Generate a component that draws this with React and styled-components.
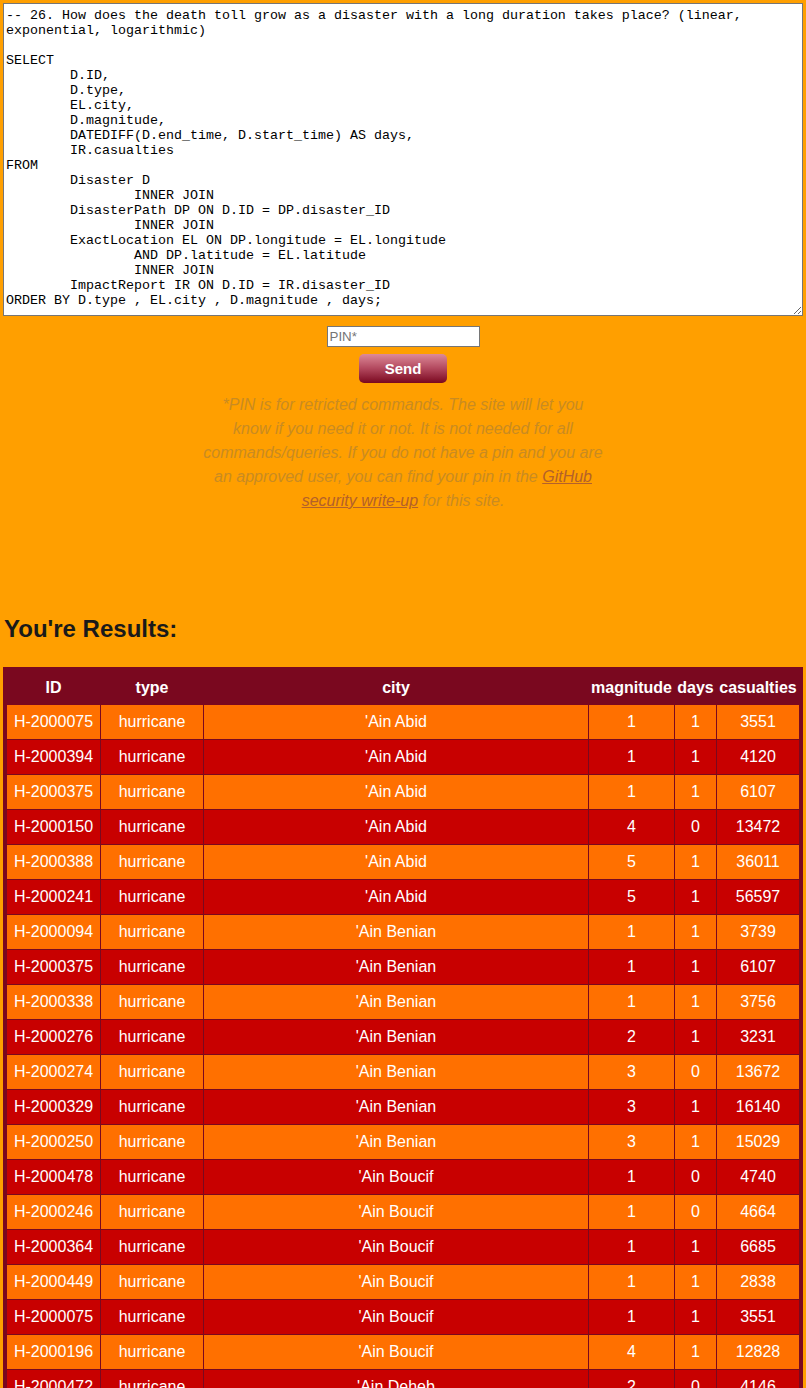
import React from 'react'
import styled, { createGlobalStyle } from 'styled-components'

const GlobalStyle = createGlobalStyle`
    html, body {
        margin: 0;
        background: #ff9f00;
    }
    body {
        font-family: "Liberation Sans", Arial, sans-serif;
    }
`;

const Page = styled.div`
    padding: 3px;
    display: flex;
    flex-direction: column;
`;

const QueryBox = styled.textarea`
    box-sizing: border-box;
    width: 800px;
    height: 313px;
    margin: 0;
    padding: 4px 2px 2px;
    border: 1px solid #767676;
    background: #fff;
    color: #000;
    font-family: "Liberation Mono", "Courier New", monospace;
    font-size: 13.333px;
    line-height: 15px;
    tab-size: 8;
    resize: both;
    outline: none;
`;

const Form = styled.div`
    display: flex;
    flex-direction: column;
    align-items: center;
    padding-top: 10px;
`;

const PinInput = styled.input`
    box-sizing: border-box;
    width: 153px;
    height: 21px;
    padding: 1px 2px;
    border: 1px solid #767676;
    background: #fff;
    font-family: "Liberation Sans", Arial, sans-serif;
    font-size: 13.333px;
    &::placeholder {
        color: #757575;
    }
`;

const SendButton = styled.button`
    margin-top: 7px;
    width: 88px;
    height: 29px;
    border: none;
    border-radius: 5px;
    background: linear-gradient(to bottom, #dd8a98 0%, #b2485e 50%, #7a081f 100%);
    color: #fff;
    font-family: "Liberation Sans", Arial, sans-serif;
    font-weight: bold;
    font-size: 15px;
    cursor: pointer;
`;

const Note = styled.p`
    width: 400px;
    margin: 10px 0 0;
    text-align: center;
    font-style: italic;
    font-size: 16px;
    line-height: 24px;
    color: #c98b22;

    a {
        color: #b4612a;
    }
`;

const Heading = styled.h2`
    margin: 102px 0 0 1px;
    font-size: 24px;
    line-height: 28px;
    font-weight: bold;
    color: #1a1a1a;
`;

const Table = styled.table`
    margin-top: 24px;
    width: 800px;
    border: 3px solid #7a081f;
    border-spacing: 1px;
    background: #7a081f;
    color: #fff;
    font-size: 16px;
`;

const Head = styled.th`
    height: 33px;
    padding: 0 1px;
    font-weight: bold;
    text-align: center;
    white-space: nowrap;
`;

const Row = styled.tr`
    background: ${(p) => (p.$odd ? '#c80000' : '#ff7000')};
`;

const Cell = styled.td`
    height: 34px;
    padding: 0 1px;
    text-align: center;
    white-space: nowrap;
`;

const query = `-- 26. How does the death toll grow as a disaster with a long duration takes place? (linear, exponential, logarithmic)

SELECT
\tD.ID,
\tD.type,
\tEL.city,
\tD.magnitude,
\tDATEDIFF(D.end_time, D.start_time) AS days,
\tIR.casualties
FROM
\tDisaster D
\t\tINNER JOIN
\tDisasterPath DP ON D.ID = DP.disaster_ID
\t\tINNER JOIN
\tExactLocation EL ON DP.longitude = EL.longitude
\t\tAND DP.latitude = EL.latitude
\t\tINNER JOIN
\tImpactReport IR ON D.ID = IR.disaster_ID
ORDER BY D.type , EL.city , D.magnitude , days;`

const columns = [
    { key: 'id', label: 'ID', width: 93 },
    { key: 'type', label: 'type', width: 102 },
    { key: 'city', label: 'city', width: 384 },
    { key: 'magnitude', label: 'magnitude', width: 85 },
    { key: 'days', label: 'days', width: 41 },
    { key: 'casualties', label: 'casualties', width: 82 },
]

const rows = [
    ['H-2000075', "'Ain Abid", 1, 1, 3551],
    ['H-2000394', "'Ain Abid", 1, 1, 4120],
    ['H-2000375', "'Ain Abid", 1, 1, 6107],
    ['H-2000150', "'Ain Abid", 4, 0, 13472],
    ['H-2000388', "'Ain Abid", 5, 1, 36011],
    ['H-2000241', "'Ain Abid", 5, 1, 56597],
    ['H-2000094', "'Ain Benian", 1, 1, 3739],
    ['H-2000375', "'Ain Benian", 1, 1, 6107],
    ['H-2000338', "'Ain Benian", 1, 1, 3756],
    ['H-2000276', "'Ain Benian", 2, 1, 3231],
    ['H-2000274', "'Ain Benian", 3, 0, 13672],
    ['H-2000329', "'Ain Benian", 3, 1, 16140],
    ['H-2000250', "'Ain Benian", 3, 1, 15029],
    ['H-2000478', "'Ain Boucif", 1, 0, 4740],
    ['H-2000246', "'Ain Boucif", 1, 0, 4664],
    ['H-2000364', "'Ain Boucif", 1, 1, 6685],
    ['H-2000449', "'Ain Boucif", 1, 1, 2838],
    ['H-2000075', "'Ain Boucif", 1, 1, 3551],
    ['H-2000196', "'Ain Boucif", 4, 1, 12828],
    ['H-2000472', "'Ain Deheb", 2, 0, 4146],
    ['H-2000233', "'Ain Deheb", 3, 1, 9812],
    ['H-2000107', "'Ain Deheb", 4, 1, 21460],
].map(([id, city, magnitude, days, casualties]) => ({
    id, type: 'hurricane', city, magnitude, days, casualties,
}))

const App = () => {
    return (
        <>
            <GlobalStyle />
            <Page>
                <QueryBox defaultValue={query} spellCheck={false} />

                <Form>
                    <PinInput type="password" placeholder="PIN*" />
                    <SendButton>Send</SendButton>
                    <Note>
                        *PIN is for retricted commands. The site will let you know if you need it or not.
                        It is not needed for all commands/queries. If you do not have a pin and you are an
                        approved user, you can find your pin in the <a href="#security">GitHub security write-up</a> for this site.
                    </Note>
                </Form>

                <Heading>You're Results:</Heading>

                <Table>
                    <colgroup>
                        {columns.map((c) => (
                            <col key={c.key} style={{ width: c.width }} />
                        ))}
                    </colgroup>
                    <thead>
                        <tr>
                            {columns.map((c) => (
                                <Head key={c.key}>{c.label}</Head>
                            ))}
                        </tr>
                    </thead>
                    <tbody>
                        {rows.map((row, i) => (
                            <Row key={i} $odd={i % 2 === 1}>
                                {columns.map((c) => (
                                    <Cell key={c.key}>{row[c.key]}</Cell>
                                ))}
                            </Row>
                        ))}
                    </tbody>
                </Table>
            </Page>
        </>
    )
}

export default App
